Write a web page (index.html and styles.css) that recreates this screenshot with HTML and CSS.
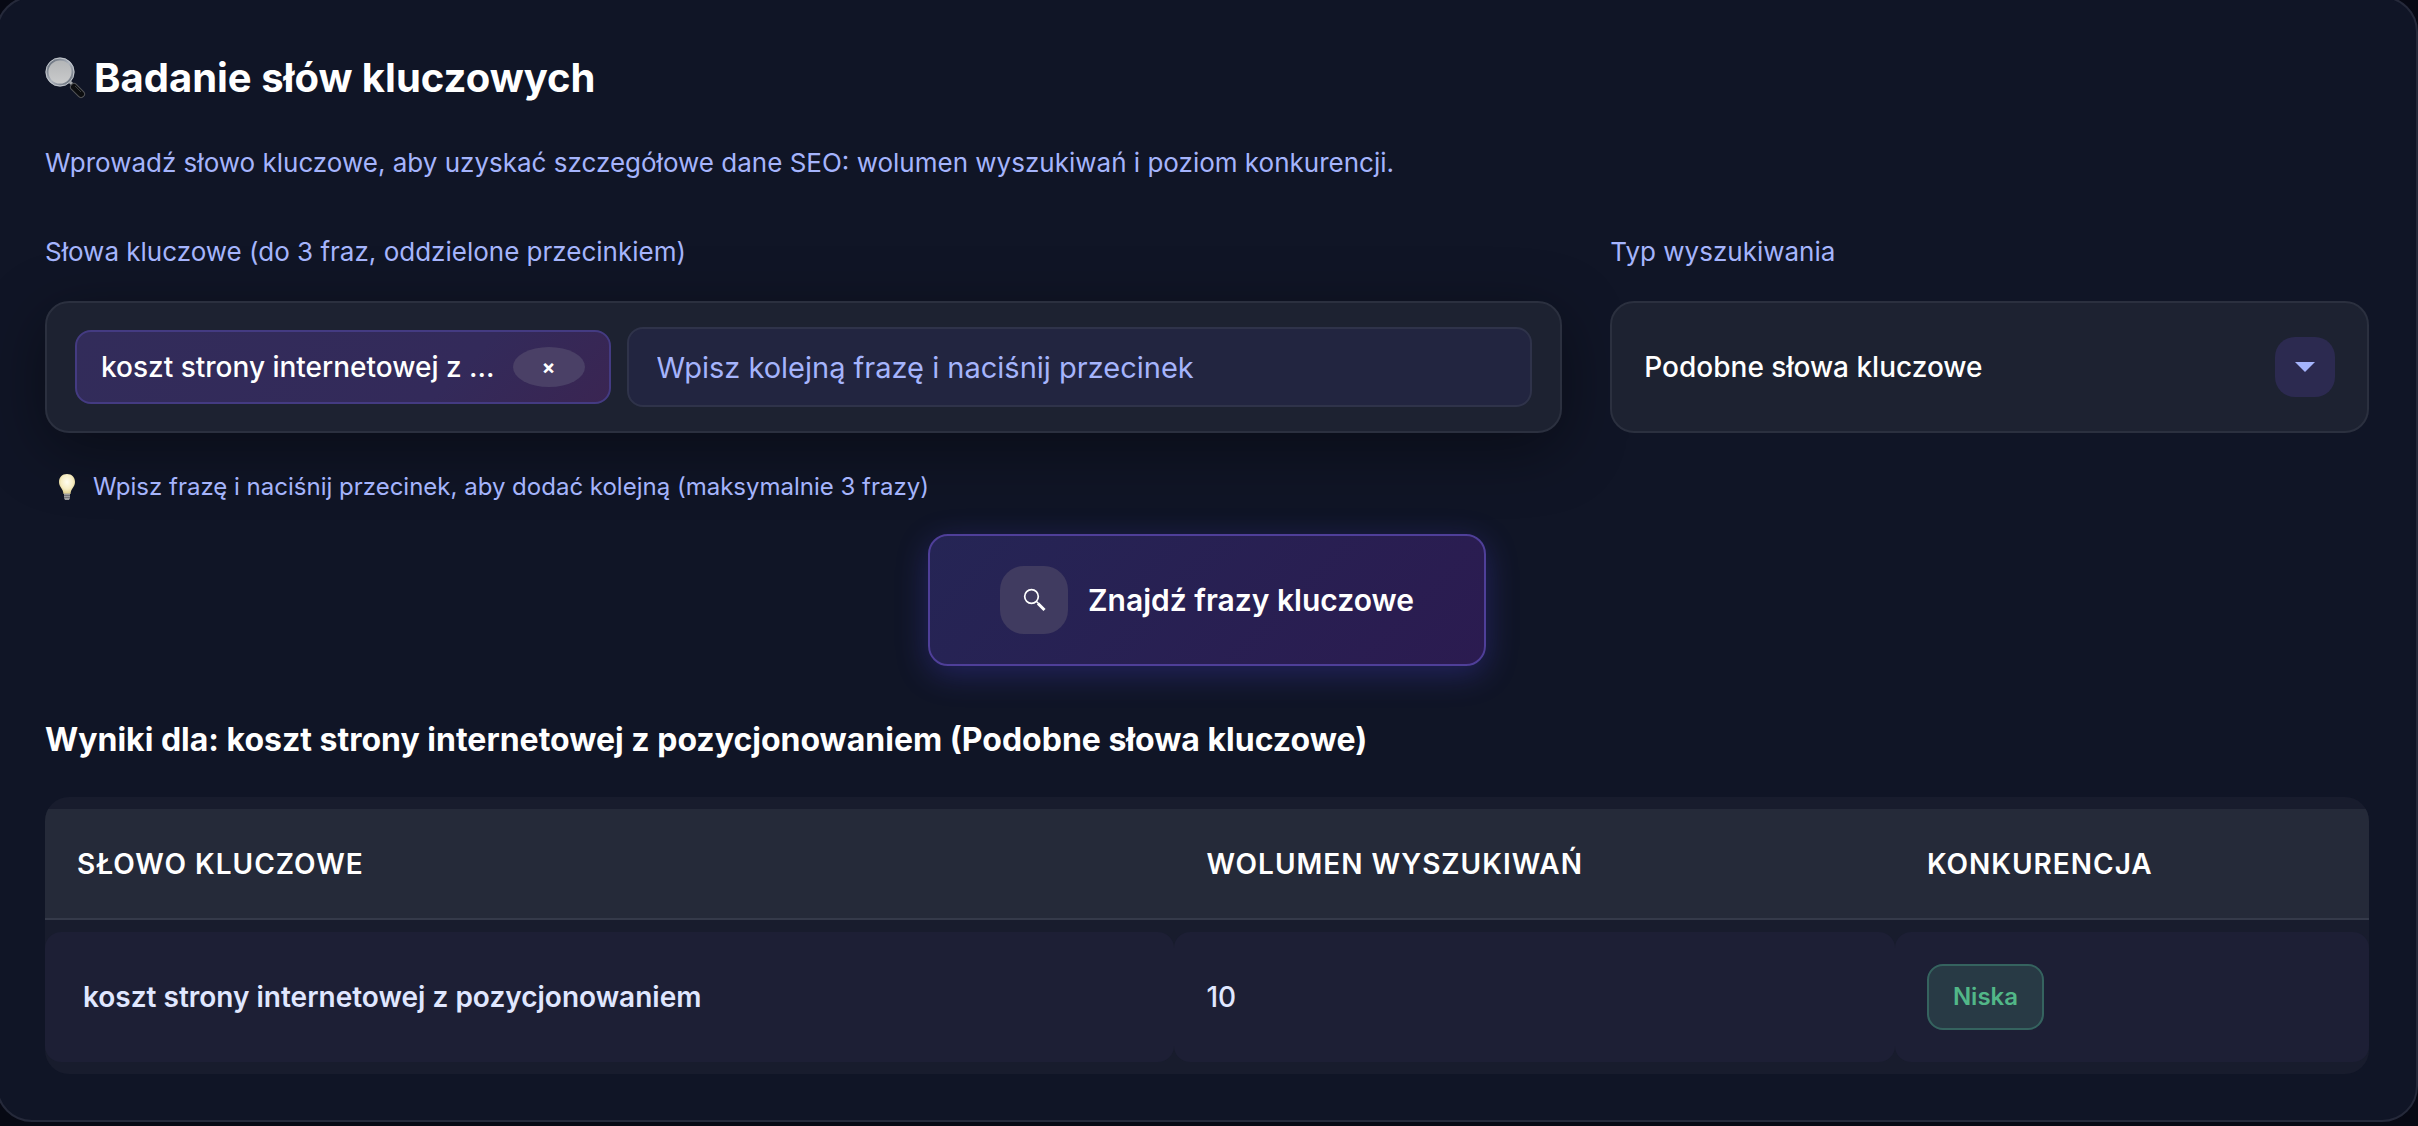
FILE: index.html
```html
<!DOCTYPE html>
<html lang="pl">
<head>
<meta charset="utf-8">
<title>Badanie słów kluczowych</title>
<meta name="viewport" content="width=device-width, initial-scale=1">
<link rel="stylesheet" href="styles.css">
</head>
<body>
<main class="panel">
  <h1 class="title">
    <svg class="title-icon" viewBox="0 0 42 42" aria-hidden="true">
      <defs>
        <linearGradient id="lens" x1="0" y1="0" x2="0" y2="1"><stop offset="0" stop-color="#b2b4b6"/><stop offset="1" stop-color="#cbcccd"/></linearGradient>
        <linearGradient id="rim" x1="0" y1="0" x2="1" y2="1"><stop offset="0" stop-color="#59616e"/><stop offset=".5" stop-color="#aeb4bd"/><stop offset="1" stop-color="#5c6470"/></linearGradient>
      </defs>
      <path d="M24 24l4 4" stroke="#a5a8ac" stroke-width="3"/>
      <path d="M29 30l7 7" stroke="#55575a" stroke-width="8" stroke-linecap="round"/>
      <path d="M29 30l7 7" stroke="#0c0d0f" stroke-width="6" stroke-linecap="round"/>
      <path d="M30 29l6 6" stroke="#3a3d41" stroke-width="1"/>
      <circle cx="15" cy="15" r="13" fill="url(#lens)" stroke="url(#rim)" stroke-width="3"/>
      <circle cx="15" cy="15" r="14" fill="none" stroke="#c3c7cd" stroke-width="1"/>
    </svg>
    Badanie słów kluczowych
  </h1>
  <p class="lead">Wprowadź słowo kluczowe, aby uzyskać szczegółowe dane SEO: wolumen wyszukiwań i poziom konkurencji.</p>

  <form class="form">
    <div class="fields">
      <div class="field">
        <label class="label" for="phrase">Słowa kluczowe (do 3 fraz, oddzielone przecinkiem)</label>
        <div class="box tags">
          <span class="tag">koszt strony internetowej z ...
            <button class="tag-remove" type="button" aria-label="Usuń frazę">×</button>
          </span>
          <input class="phrase" id="phrase" type="text" placeholder="Wpisz kolejną frazę i naciśnij przecinek">
        </div>
        <p class="hint">
          <svg class="hint-icon" viewBox="0 0 16 26" aria-hidden="true">
            <defs><radialGradient id="glow" cx=".5" cy=".4" r=".6"><stop offset="0" stop-color="#fffdf0"/><stop offset=".6" stop-color="#f6edc4"/><stop offset="1" stop-color="#d9c987"/></radialGradient></defs>
            <path d="M8 0C3 0 0 3.500 0 8c0 5 4 6 4.500 12h7C12 14 16 13 16 8c0-4.500-3-8-8-8z" fill="url(#glow)"/>
            <path d="M5 19.500h6v4.500L10 26H6l-1-2z" fill="#9c9ca0"/>
            <path d="M5 21.500h6M5 23.500h6" stroke="#66676b" stroke-width=".8"/>
          </svg>
          Wpisz frazę i naciśnij przecinek, aby dodać kolejną (maksymalnie 3 frazy)
        </p>
      </div>
      <div class="field">
        <label class="label" for="type">Typ wyszukiwania</label>
        <div class="select-wrap">
          <select class="box select" id="type"><option>Podobne słowa kluczowe</option></select>
          <span class="select-arrow"><svg viewBox="0 0 20 10" aria-hidden="true"><path d="M0 0h20L10 10z" fill="#a5b4fc"/></svg></span>
        </div>
      </div>
    </div>
    <button class="submit" type="button">
      <span class="submit-icon">
        <svg viewBox="0 0 24 24" aria-hidden="true"><circle cx="9.500" cy="8.500" r="6.800" fill="none" stroke="#fff" stroke-width="1.700"/><path d="M14.500 13.500l2 2" stroke="#fff" stroke-width="1.500"/><path d="M16 15.500l6.500 6.500" stroke="#fff" stroke-width="3"/></svg>
      </span>
      Znajdź frazy kluczowe
    </button>
  </form>

  <h2 class="results-title">Wyniki dla: koszt strony internetowej z pozycjonowaniem (Podobne słowa kluczowe)</h2>
  <table class="results">
    <thead>
      <tr><th class="col-phrase">Słowo kluczowe</th><th class="col-volume">Wolumen wyszukiwań</th><th>Konkurencja</th></tr>
    </thead>
    <tbody>
      <tr><td class="phrase-cell">koszt strony internetowej z pozycjonowaniem</td><td class="volume-cell">10</td><td><span class="badge">Niska</span></td></tr>
    </tbody>
  </table>
</main>
</body>
</html>
```
FILE: styles.css
```css
* { box-sizing: border-box; }

body {
  margin: 0;
  background: #070914;
  color: #fff;
  font-family: Inter, "Liberation Sans", sans-serif;
  overflow: hidden;
}

.panel {
  margin: -4px 0 0 -4px;
  padding: 50px 47px 46px;
  background: #101526;
  border: 2px solid #25293a;
  border-radius: 36px;
}

.title {
  display: flex;
  align-items: center;
  gap: 7px;
  margin: 0;
  font-size: 40px;
  line-height: 60px;
  font-weight: 700;
}

.title-icon { width: 42px; height: 42px; }

.lead {
  margin: 35px 0 0;
  color: #a5b4fc;
  font-size: 26px;
  line-height: 40px;
}

.form {
  display: flex;
  flex-direction: column;
  margin-top: 49px;
}

.fields {
  display: grid;
  grid-template-columns: 2fr 1fr;
  gap: 48px;
}

.field { min-width: 0; }

.label {
  display: block;
  margin-bottom: 29px;
  color: #a5b4fc;
  font-size: 26px;
  line-height: 40px;
}

.box {
  width: 100%;
  height: 132px;
  background: #1d2231;
  border: 2px solid #2b303f;
  border-radius: 24px;
}

.tags {
  display: flex;
  align-items: center;
  gap: 16px;
  padding: 0 28px;
  box-shadow: 0 16px 64px rgba(0, 0, 0, 0.4);
}

.tag {
  display: flex;
  align-items: center;
  gap: 18px;
  height: 74px;
  padding: 0 24px;
  background: linear-gradient(135deg, #322c5a, #332a5a 70%, #3a2552);
  border: 2px solid #443b82;
  border-radius: 16px;
  font-size: 28px;
  font-weight: 500;
  white-space: nowrap;
}

.tag-remove {
  width: 72px;
  height: 40px;
  padding: 0;
  background: #4a4066;
  border: 0;
  border-radius: 50%;
  color: #fff;
  font: 700 20px/40px Inter, sans-serif;
}

.phrase {
  flex: 1;
  min-width: 0;
  height: 80px;
  padding: 0 28px;
  background: #222540;
  border: 2px solid #2f334a;
  border-radius: 16px;
  color: #fff;
  font: 400 29px Inter, sans-serif;
}

.phrase::placeholder { color: #a5b4fc; opacity: 1; }

.hint {
  display: flex;
  align-items: center;
  gap: 18px;
  margin: 36px 0 0;
  padding-left: 14px;
  color: #a5b4fc;
  font-size: 24px;
  line-height: 36px;
}

.hint-icon { width: 16px; height: 26px; }

.select-wrap { position: relative; }

.select {
  appearance: none;
  padding: 0 120px 0 32px;
  color: #fff;
  font: 500 28px Inter, sans-serif;
}

.select-arrow {
  position: absolute;
  top: 36px;
  right: 34px;
  display: grid;
  place-items: center;
  width: 60px;
  height: 60px;
  background: #2c2a50;
  border-radius: 20px;
  pointer-events: none;
}

.select-arrow svg { width: 20px; height: 10px; }

.submit {
  display: flex;
  align-items: center;
  justify-content: center;
  align-self: center;
  gap: 20px;
  height: 132px;
  margin-top: 29px;
  padding: 0 70px;
  background: linear-gradient(135deg, #252555, #2b1b50);
  border: 2px solid #4f3f99;
  border-radius: 20px;
  box-shadow: 0 8px 32px rgba(79, 70, 229, 0.3);
  color: #fff;
  font: 600 30px Inter, sans-serif;
}

.submit-icon {
  display: grid;
  place-items: center;
  width: 68px;
  height: 68px;
  background: #403b60;
  border-radius: 24px;
}

.submit-icon svg { width: 24px; height: 24px; }

.results-title {
  margin: 52px 0 0;
  font-size: 32px;
  line-height: 44px;
  font-weight: 700;
}

.results {
  width: 100%;
  margin-top: 35px;
  background: #181c2d;
  border-collapse: separate;
  border-spacing: 0 12px;
  border-radius: 24px;
  overflow: hidden;
  table-layout: fixed;
  font-size: 28px;
  line-height: 44px;
  text-align: left;
}

.col-phrase { width: 48.6%; }
.col-volume { width: 31%; }

.results th {
  height: 111px;
  padding: 0 32px;
  background: #252a39;
  border-bottom: 2px solid #353a4a;
  font-weight: 600;
  letter-spacing: 1px;
  text-transform: uppercase;
}

.results td {
  height: 130px;
  padding: 0 32px;
  background: #1d1f35;
  border-radius: 16px;
  color: #e0e7ff;
}

.results .phrase-cell {
  padding-left: 38px;
  font-weight: 600;
}

.results .volume-cell { font-weight: 500; }

.badge {
  display: inline-block;
  padding: 9px 24px;
  background: #283a45;
  border: 2px solid #35635f;
  border-radius: 16px;
  color: #52b788;
  font-size: 24px;
  font-weight: 600;
  vertical-align: middle;
}
```
